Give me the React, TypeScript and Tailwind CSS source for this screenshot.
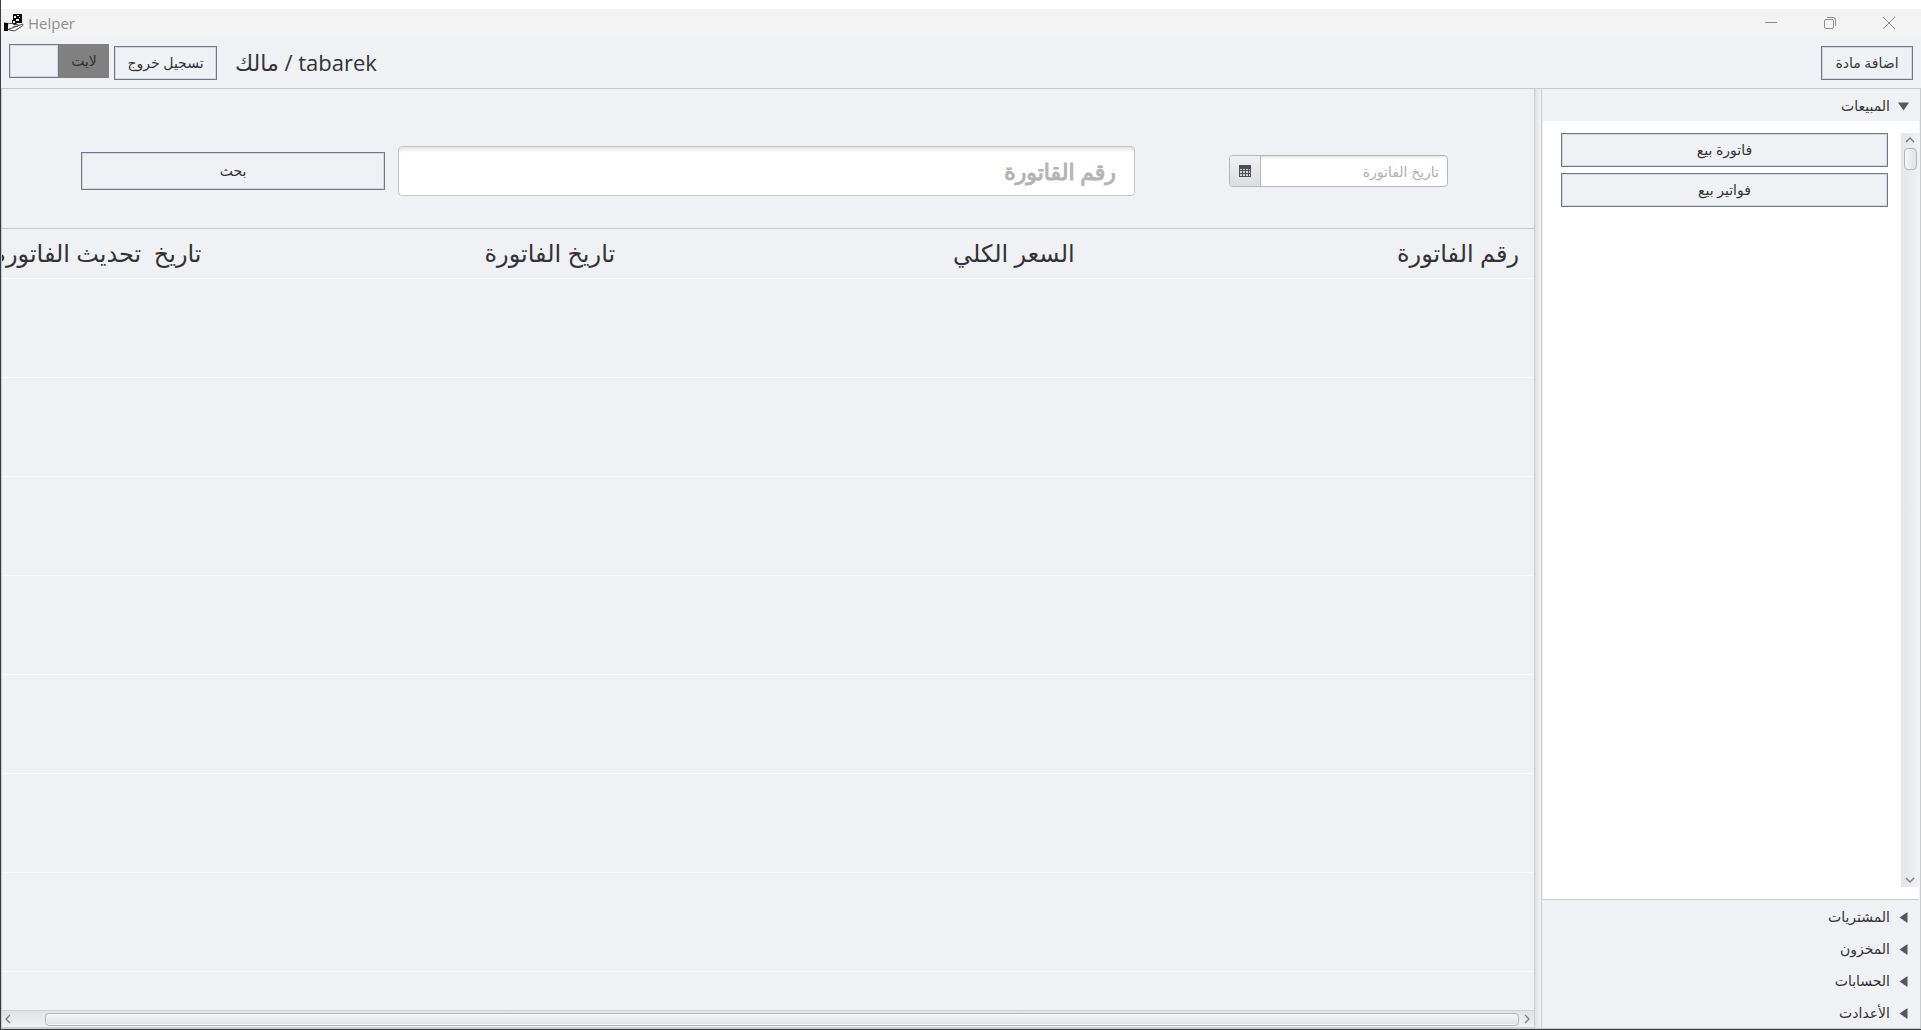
import React from 'react';

const outlineButton =
  'border border-[#70798c] bg-[#f0f1f5] text-sm leading-5 text-[#333] shadow-[inset_0_0_0_1px_#d3d7e2] whitespace-nowrap flex items-center justify-center';

function Logo() {
  return (
    <svg viewBox="0 0 20 20" className="h-5 w-5" aria-hidden="true">
      <path d="M9 1h9v9h-5l-1 1H8V7h1z" fill="#0c0c0c" />
      <path d="M10 3h2v2h-2zM13 2h2v1h-2zM12 6h3v2h-3zM9 8h2v2H9zM15 4h1v1h-1z" fill="#eee" />
      <path d="M0 9.500l4 .5v8H0z" fill="#0c0c0c" />
      <path d="M4 11c2-1 4-1 6 .5h3.500c1.200 0 1.200 1.800 0 1.800H9.500M13.500 13l4.500-1.800c1.200-.2 1.500 1 .5 1.600L12 17c-1 .8-2.500 1-4 .5l-4-1z" fill="#fafafa" stroke="#444" strokeWidth="1" />
    </svg>
  );
}

function TitleBar() {
  return (
    <div dir="ltr" className="mt-[9px] flex h-7 shrink-0 items-center justify-between bg-[#f3f3f3] pr-[3px] text-[#8f8f8f]">
      <div className="flex items-center gap-1 pl-[3px]">
        <Logo />
        <span className="text-[15px] leading-6">Helper</span>
      </div>
      <div className="flex">
        <button aria-label="Minimize" className="flex w-[58px] justify-center">
          <svg viewBox="0 0 14 14" className="h-3.5 w-3.5" fill="none" stroke="currentColor"><path d="M1 6.500h12" /></svg>
        </button>
        <button aria-label="Restore" className="flex w-[59px] justify-center">
          <svg viewBox="0 0 14 14" className="h-3.5 w-3.5" fill="none" stroke="currentColor"><rect x="1.500" y="3.500" width="9" height="9" rx="1.500" /><path d="M4 1.500h6q2.500 0 2.500 2.500v6" /></svg>
        </button>
        <button aria-label="Close" className="flex w-[59px] justify-center">
          <svg viewBox="0 0 14 14" className="h-3.5 w-3.5" fill="none" stroke="currentColor"><path d="M1 1l12 12M13 1L1 13" /></svg>
        </button>
      </div>
    </div>
  );
}

function Header() {
  return (
    <header className="flex h-[51px] shrink-0 items-start gap-[5px] px-2 pt-[9px]">
      <button className={`${outlineButton} ml-auto h-[34px] w-[92px]`}>اضافة مادة</button>
      <div className="pl-[13px] text-[22px] leading-8 text-[#333]">tabarek / مالك</div>
      <button className={`${outlineButton} h-[34px] w-[103px]`}>تسجيل خروج</button>
      <button role="switch" aria-checked="false" className="-mt-0.5 flex h-[34px] w-[100px] bg-[#808080] text-sm text-[#333]">
        <span className="flex h-full flex-1 items-center justify-center">لايت</span>
        <span className="h-full w-[50px] border border-[#70798c] bg-[#f0f1f5] shadow-[inset_0_0_0_1px_#d3d7e2]" />
      </button>
    </header>
  );
}

function CalendarIcon() {
  return (
    <svg viewBox="0 0 12 12" className="h-3 w-3" aria-hidden="true">
      <path d="M0 0h12v12H0z" fill="#4d4e52" />
      <path d="M1 4h2v1H1zM4 4h2v1H4zM7 4h2v1H7zM10 4h1v1h-1zM1 6h2v2H1zM4 6h2v2H4zM7 6h2v2H7zM10 6h1v2h-1zM1 9h2v2H1zM4 9h2v2H4zM7 9h2v2H7zM10 9h1v2h-1z" fill="#d5d6da" />
    </svg>
  );
}

function SearchForm() {
  return (
    <form className="flex h-[140px] shrink-0 items-center border-b border-[#c8c9cd] pl-[79px] pr-[86px] pt-[25px]" onSubmit={(e) => e.preventDefault()}>
      <div className="flex h-8 w-[219px] overflow-hidden rounded border border-[#b5b6b9] bg-white">
        <input aria-label="تاريخ الفاتورة" placeholder="تاريخ الفاتورة" className="min-w-0 flex-1 px-2 pt-0.5 text-sm text-[#333] shadow-[inset_0_3px_3px_-2px_#d8d8d8] outline-none placeholder:text-[#b0b0b0]" />
        <button type="button" aria-label="التقويم" className="flex w-[31px] items-center justify-center border-r border-[#b5b6b9] bg-linear-to-b from-[#f0f1f4] to-[#dcdde1]">
          <CalendarIcon />
        </button>
      </div>
      <input aria-label="رقم القاتورة" placeholder="رقم القاتورة" className="mr-[94px] h-[50px] min-w-0 flex-1 rounded border border-[#c4c5c8] bg-white px-[18px] text-[22px] font-medium text-[#333] shadow-[inset_0_5px_4px_-3px_#dcdcdc] outline-none [-webkit-text-stroke:1px] placeholder:text-[#b4b4b4]" />
      <button className={`${outlineButton} mr-[13px] h-[38px] w-[304px]`}>بحث</button>
    </form>
  );
}

const columns = ['رقم الفاتورة', 'السعر الكلي', 'تاريخ الفاتورة', 'تاريخ\u00a0 تحديث الفاتورة'];

function InvoiceTable() {
  return (
    <div className="min-h-0 flex-1 overflow-hidden">
      <table className="w-full table-fixed border-collapse">
        <colgroup>
          <col className="w-[29%]" />
          <col className="w-[30%]" />
          <col className="w-[27%]" />
          <col className="w-[14%]" />
        </colgroup>
        <thead>
          <tr className="h-[49px] border-b border-[#f9fafc]">
            {columns.map((label) => (
              <th key={label} scope="col" className="overflow-hidden whitespace-nowrap p-0 pr-[15px] text-right text-2xl font-normal leading-8 text-[#333]">
                {label}
              </th>
            ))}
          </tr>
        </thead>
        <tbody>
          {Array.from({ length: 8 }, (_, row) => (
            <tr key={row} className="h-[99px] border-b border-[#f9fafc]">
              {columns.map((label) => <td key={label} />)}
            </tr>
          ))}
        </tbody>
      </table>
    </div>
  );
}

function Chevron({ d }: { d: string }) {
  return (
    <svg viewBox="0 0 10 10" className="h-2.5 w-2.5" fill="none" stroke="#77787b" strokeWidth="1.3" aria-hidden="true">
      <path d={d} />
    </svg>
  );
}

function HorizontalScroll() {
  return (
    <div dir="ltr" className="flex h-[18px] shrink-0 items-center border-b border-t border-[#d0d1d4] bg-linear-to-b from-[#e1e2e6] to-[#f0f1f4] px-0.5">
      <button aria-label="يسار" className="flex w-[41px]"><Chevron d="M6 1L2 5l4 4" /></button>
      <div className="h-[13px] flex-1 rounded border border-[#b5b6b9] bg-linear-to-b from-[#f6f7f9] to-[#dfe0e4] shadow-[inset_0_0_0_1px_#f4f5f7]" />
      <button aria-label="يمين" className="flex w-[13px] justify-end"><Chevron d="M3 1l4 4-4 4" /></button>
    </div>
  );
}

function SectionTitle({ label, open }: { label: string; open?: boolean }) {
  return (
    <button aria-expanded={!!open} className="flex h-8 w-full shrink-0 items-center gap-2 pr-[11px] pt-0.5 text-sm text-[#333]">
      <svg viewBox="0 0 11 11" className="h-[11px] w-[11px]" fill="#57585c" aria-hidden="true">
        <path d={open ? 'M0 1.500h11L5.500 9.500z' : 'M9.500 0v11L1.500 5.500z'} />
      </svg>
      {label}
    </button>
  );
}

function Sidebar() {
  return (
    <aside className="flex w-[380px] shrink-0 flex-col border-x border-[#c8c9cd]">
      <SectionTitle label="المبيعات" open />
      <div className="mx-px flex min-h-0 flex-1 border-b border-[#c8c9cd] bg-white py-3">
        <div className="flex w-[18px] flex-col items-center bg-linear-to-r from-[#e3e4e8] to-[#f0f1f4] pt-0.5">
          <button aria-label="أعلى" className="flex h-[13px] items-start"><Chevron d="M1 7l4-4 4 4" /></button>
          <div className="h-[22px] w-[13px] rounded border border-[#b5b6b9] bg-linear-to-r from-[#f6f7f9] to-[#dfe0e4]" />
          <button aria-label="أسفل" className="mt-auto flex h-[14px] items-center"><Chevron d="M1 3l4 4 4-4" /></button>
        </div>
        <div className="ml-[18px] mr-[13px] flex flex-1 flex-col gap-1.5">
          <button className={`${outlineButton} h-[34px] w-full`}>فاتورة بيع</button>
          <button className={`${outlineButton} h-[34px] w-full`}>فواتير بيع</button>
        </div>
      </div>
      {['المشتريات', 'المخزون', 'الحسابات', 'الأعدادت'].map((label) => (
        <SectionTitle key={label} label={label} />
      ))}
    </aside>
  );
}

export default function App() {
  return (
    <div className="bg-white">
      <div dir="rtl" className="flex h-screen flex-col overflow-hidden border-b border-l border-[#3c3c40] font-['Open_Sans','DejaVu_Sans',sans-serif]">
        <TitleBar />
        <div className="flex min-h-0 flex-1 flex-col bg-[#f0f1f5]">
          <Header />
          <div className="flex min-h-0 flex-1 border-y border-[#c8c9cd]">
            <Sidebar />
            <div className="w-1.5 shrink-0 bg-linear-to-r from-[#e0e1e5] to-[#f3f4f7]" />
            <main className="flex min-w-0 flex-1 flex-col border-x border-[#c8c9cd]">
              <SearchForm />
              <InvoiceTable />
              <HorizontalScroll />
            </main>
          </div>
        </div>
      </div>
    </div>
  );
}
